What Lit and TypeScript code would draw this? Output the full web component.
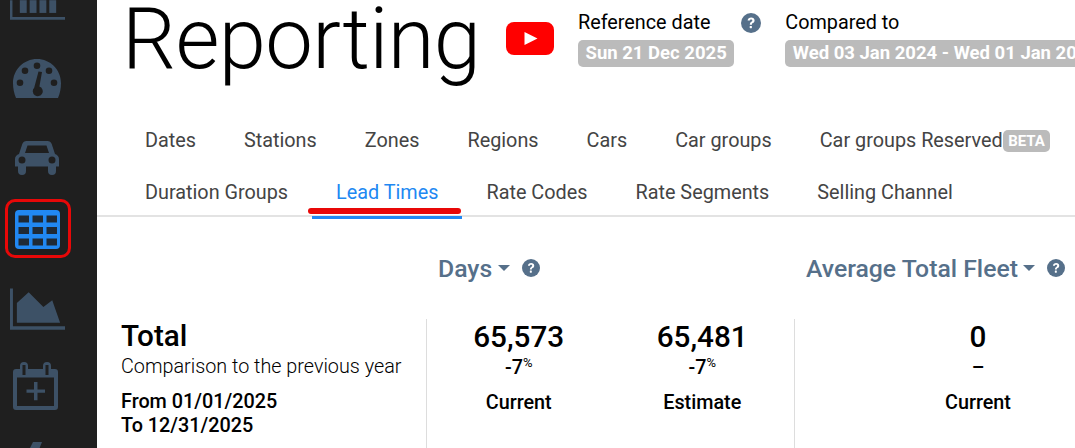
import {LitElement, css, html, svg} from 'lit'
import {customElement} from 'lit/decorators.js'

const topTabs = ['Dates', 'Stations', 'Zones', 'Regions', 'Cars', 'Car groups']
const bottomTabs = ['Duration Groups', 'Lead Times', 'Rate Codes', 'Rate Segments', 'Selling Channel']

const helpIcon = html`<svg class="help" viewBox="0 0 20 20">
  <circle cx="10" cy="10" r="10" fill="#56708a"></circle>
  <path d="M6.6 7.6C6.8 5.6 8.2 4.5 10.2 4.5c2 0 3.4 1.2 3.4 2.9 0 1.3-.7 2-1.7 2.7-.8.5-1 .8-1 1.6H8.800c0-1.500.5-2.200 1.500-2.900.7-.5 1-.8 1-1.300 0-.6-.5-1-1.200-1-.8 0-1.200.5-1.300 1.100z" fill="#fff"></path>
  <rect x="8.700" y="12.900" width="2.200" height="2.300" rx=".4" fill="#fff"></rect>
</svg>`

const sideIcons = [
  // bar chart, cut by the top of the window
  svg`<svg class="bars" viewBox="0 0 56 20" fill="#3d5166">
    <path d="M0 0h2.500v17H56v3H0z"></path>
    <rect x="10" y="0" width="7" height="13"></rect><rect x="20" y="0" width="7" height="13"></rect>
    <rect x="30" y="0" width="7" height="13"></rect><rect x="40" y="0" width="7" height="13"></rect>
  </svg>`,
  svg`<svg class="gauge" viewBox="0 0 48 39" fill="#3d5166">
    <path fill-rule="evenodd" d="M24 0C10.700 0 0 10.700 0 24c0 5.400 1 10.500 3 15h42c2-4.500 3-9.600 3-15C48 10.700 37.300 0 24 0zM24 3.500a3.300 3.300 0 1 1 0 6.600 3.300 3.300 0 0 1 0-6.600zM12 8.500a3.300 3.300 0 1 1 0 6.600 3.300 3.300 0 0 1 0-6.600zM36 8.500a3.300 3.300 0 1 1 0 6.600 3.300 3.300 0 0 1 0-6.600zM7 20.500a3.300 3.300 0 1 1 0 6.600 3.300 3.300 0 0 1 0-6.600zM41 20.500a3.300 3.300 0 1 1 0 6.600 3.300 3.300 0 0 1 0-6.600zM29 13l-2.600 14.500a5 5 0 1 1-5.200 1.200L25.500 12.500z"></path>
  </svg>`,
  svg`<svg class="car" viewBox="0 0 44 34" fill="#3d5166">
    <path fill-rule="evenodd" d="M11.500 0h21c2 0 3.500 1.100 4.200 3L40 13c2.400.7 4 2.700 4 5v7.500h-3V30a4 4 0 0 1-8 0v-4.500H11V30a4 4 0 0 1-8 0v-4.500H0V18c0-2.300 1.600-4.300 4-5l3.300-10c.7-1.900 2.200-3 4.200-3zM12.500 4.500L10 12h24l-2.500-7.500zM7 15.500a3.500 3.500 0 1 0 0 7 3.500 3.500 0 0 0 0-7zM37 15.500a3.500 3.500 0 1 0 0 7 3.500 3.500 0 0 0 0-7z"></path>
  </svg>`,
  svg`<svg class="table" viewBox="0 0 45 39">
    <rect width="45" height="39" rx="4" fill="#2188f2"></rect>
    ${[5.500, 17, 28.500].map((y) => [3.500, 17.500, 31.500].map((x) => svg`<rect x=${x} y=${y} width="10.500" height="7" fill="#1f2a36"></rect>`))}
  </svg>`,
  svg`<svg class="area" viewBox="0 0 56 42" fill="#3d5166">
    <path d="M0 0h3v38.500h53V42H0z"></path>
    <path d="M7 35V15L19 4l15 15 9-7 8 23z"></path>
  </svg>`,
  svg`<svg class="calendar" viewBox="0 0 45 48" fill="#3d5166">
    <path fill-rule="evenodd" d="M11 0a4 4 0 0 1 4 4v3h15V4a4 4 0 0 1 8 0v3h4a3 3 0 0 1 3 3v35a3 3 0 0 1-3 3H3a3 3 0 0 1-3-3V10a3 3 0 0 1 3-3h4V4a4 4 0 0 1 4-4zM9.500 3v10h3V3zM32.500 3v10h3V3zM4 15.500V44h37V15.500z"></path>
    <path d="M21 20h3.500v7.500H32v3.200h-7.500v7.500H21v-7.500h-7.500v-3.200H21z"></path>
  </svg>`,
  svg`<svg class="partial" viewBox="0 0 14 10" fill="#3d5166"><path d="M5 0h9l-4 10H0z"></path></svg>`,
]

@customElement('app-root')
export class AppRoot extends LitElement {
  static styles = css`
    * {
      box-sizing: border-box;
    }

    :host {
      display: flex;
      position: relative;
      width: 1075px;
      height: 448px;
      overflow: hidden;
      font-family: Roboto, sans-serif;
      color: #000;
      background: #fff;
    }

    .sidebar {
      flex: none;
      width: 97px;
      background: #1f1f1f;
    }

    .sidebar svg {
      display: block;
      margin-left: 13px;
    }

    .bars { width: 55px; height: 20px; margin-left: 10px !important; }
    .gauge { width: 48px; height: 39px; margin-top: 39px; }
    .car { width: 44px; height: 34px; margin-top: 43px; margin-left: 15px !important; }
    .table { width: 45px; height: 39px; margin-top: 35px; margin-left: 15px !important; }
    .area { width: 55px; height: 42px; margin-top: 39px; margin-left: 10px !important; }
    .calendar { width: 45px; height: 48px; margin-top: 32px; }
    .partial { width: 14px; height: 10px; margin-top: 32px; margin-left: 28px !important; }

    .main {
      flex: 1;
      min-width: 0;
      display: flex;
      flex-direction: column;
    }

    .head {
      display: flex;
      align-items: flex-start;
      height: 114px;
      padding-left: 25px;
    }

    h1 {
      flex: none;
      width: 384px;
      margin: 0;
      font-size: 85px;
      line-height: 78px;
      font-weight: 300;
      letter-spacing: -0.6px;
      white-space: nowrap;
    }

    .yt {
      flex: none;
      width: 48px;
      height: 33px;
      margin: 22px 0 0 0;
    }

    .date-block {
      margin-top: 11px;
      white-space: nowrap;
    }

    .date-block.ref { margin-left: 24px; }

    .date-title {
      font-size: 19.8px;
      line-height: 24px;
    }

    .badge {
      display: inline-block;
      margin-top: 5px;
      padding: 0 7.5px;
      border-radius: 5px;
      background: #bbb;
      color: #fff;
      font-size: 18.5px;
      font-weight: 700;
      line-height: 27px;
      white-space: nowrap;
    }

    .help {
      flex: none;
      display: block;
      width: 20px;
      height: 20px;
    }

    .ref-help {
      flex: none;
      margin: 13px 24px 0 7px;
    }

    nav {
      border-bottom: 2px solid #e3e3e3;
      padding: 0 0 0 24px;
      height: 103px;
    }

    .tabs {
      display: flex;
      height: 52px;
      font-size: 19.82px;
      color: #444;
      white-space: nowrap;
    }

    .tab {
      display: flex;
      align-items: center;
      padding: 0 24px;
      height: 52px;
    }

    .tab.active {
      color: #2188f2;
      border-bottom: 3px solid #2188f2;
      padding-top: 3px;
      height: 53px;
    }

    .beta {
      margin: 2px 0 0 0;
      padding: 0 5.5px;
      border-radius: 5px;
      background: #bbb;
      color: #fff;
      font-size: 15px;
      font-weight: 700;
      line-height: 22px;
    }

    .grid {
      display: grid;
      grid-template-columns: 329px 368px 1fr;
    }

    .metric {
      display: flex;
      align-items: center;
      height: 102px;
      padding: 0 0 0 12px;
      font-size: 24.75px;
      font-weight: 500;
      color: #56708a;
      white-space: nowrap;
    }

    .caret {
      width: 0;
      height: 0;
      margin: 0 12px 0 5.500px;
      border: 6px solid transparent;
      border-top-color: #56708a;
      border-bottom: 0;
    }

    .metric .help { width: 18px; height: 18px; }

    .summary {
      padding: 3px 0 0 24px;
      height: 129px;
    }

    .total {
      font-size: 29.7px;
      font-weight: 500;
      line-height: 28px;
    }

    .note {
      margin-top: 4px;
      font-size: 19.8px;
      font-weight: 300;
      line-height: 26px;
    }

    .range {
      margin-top: 10px;
      font-size: 19.8px;
      font-weight: 500;
      line-height: 24px;
    }

    .values {
      display: grid;
      grid-template-columns: repeat(2, 1fr);
      align-content: start;
      height: 129px;
      border-left: 1px solid #ddd;
    }

    .values.one {
      grid-template-columns: 366px;
    }

    .value {
      text-align: center;
    }

    .num {
      padding-top: 4px;
      font-size: 29.7px;
      font-weight: 500;
      line-height: 28px;
    }

    .pct {
      margin-top: 5px;
      font-size: 19.8px;
      font-weight: 500;
      line-height: 24px;
    }

    .pct sup {
      font-size: 13px;
      font-weight: 400;
      line-height: 0;
      vertical-align: 7px;
    }

    .label {
      margin-top: 11px;
      font-size: 19.8px;
      font-weight: 500;
      line-height: 24px;
    }

    /* red annotations drawn over the screenshot */
    .mark-box {
      position: absolute;
      left: 5px;
      top: 199px;
      width: 66px;
      height: 59px;
      border: 3px solid #e80808;
      border-radius: 10px;
    }

    .mark-line {
      position: absolute;
      left: 308px;
      top: 208px;
      width: 153px;
      height: 6px;
      border-radius: 3px;
      background: #e80808;
    }
  `

  private renderValue(num: string, pct: string, label: string) {
    return html`<div class="value">
      <div class="num">${num}</div>
      <div class="pct">${pct}${pct === '-7' ? html`<sup>%</sup>` : ''}</div>
      <div class="label">${label}</div>
    </div>`
  }

  render() {
    return html`
      <aside class="sidebar">${sideIcons}</aside>
      <div class="main">
        <header class="head">
          <h1>Reporting</h1>
          <svg class="yt" viewBox="0 0 48 33">
            <rect width="48" height="33" rx="8" fill="#f00"></rect>
            <path d="M18.500 10l13 6.500-13 6.500z" fill="#fff"></path>
          </svg>
          <div class="date-block ref">
            <div class="date-title">Reference date</div>
            <span class="badge">Sun 21 Dec 2025</span>
          </div>
          <div class="ref-help">${helpIcon}</div>
          <div class="date-block cmp">
            <div class="date-title">Compared to</div>
            <span class="badge">Wed 03 Jan 2024 - Wed 01 Jan 2025</span>
          </div>
        </header>
        <nav>
          <div class="tabs">
            ${topTabs.map((t) => html`<div class="tab">${t}</div>`)}
            <div class="tab">Car groups Reserved<span class="beta">BETA</span></div>
          </div>
          <div class="tabs">
            ${bottomTabs.map((t) => html`<div class="tab ${t === 'Lead Times' ? 'active' : ''}">${t}</div>`)}
          </div>
        </nav>
        <section class="grid">
          <div></div>
          <div class="metric">Days<span class="caret"></span>${helpIcon}</div>
          <div class="metric">Average Total Fleet<span class="caret"></span>${helpIcon}</div>
          <div class="summary">
            <div class="total">Total</div>
            <div class="note">Comparison to the previous year</div>
            <div class="range">From 01/01/2025<br />To 12/31/2025</div>
          </div>
          <div class="values">
            ${this.renderValue('65,573', '-7', 'Current')}
            ${this.renderValue('65,481', '-7', 'Estimate')}
          </div>
          <div class="values one">
            ${this.renderValue('0', '–', 'Current')}
          </div>
        </section>
      </div>
      <div class="mark-box"></div>
      <div class="mark-line"></div>
    `
  }
}
